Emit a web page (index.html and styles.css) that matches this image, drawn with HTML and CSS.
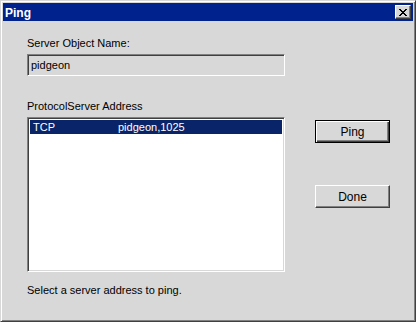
FILE: index.html
```html
<!DOCTYPE html>
<html lang="en">
<head>
    <meta charset="UTF-8">
    <title>Ping</title>
    <link rel="stylesheet" href="styles.css">
</head>
<body>
    <div class="window">
        <div class="titlebar">
            <span class="title">Ping</span>
            <button class="close-btn" aria-label="Close">
                <svg width="8" height="7" viewBox="0 0 8 7">
                    <path d="M0 0h2v1h1v1h2V1h1V0h2v1H7v1H6v1H5v1h1v1h1v1h1v1H6V6H5V5H3v1H2v1H0V6h1V5h1V4h1V3H2V2H1V1H0z" fill="#000"/>
                </svg>
            </button>
        </div>

        <div class="content">
            <div class="left">
                <div class="label first">Server Object Name:</div>
                <div class="textbox">pidgeon</div>

                <div class="label second">ProtocolServer Address</div>
                <div class="listbox">
                    <div class="row selected">
                        <span class="col-proto">TCP</span>
                        <span class="col-addr">pidgeon,1025</span>
                    </div>
                </div>

                <div class="status">Select a server address to ping.</div>
            </div>

            <div class="right">
                <button class="button default">Ping</button>
                <button class="button done">Done</button>
            </div>
        </div>
    </div>
</body>
</html>
```

FILE: styles.css
```css
body {
    margin: 0;
    background-color: #d8d8d8;
    font-family: "Liberation Sans", Arial, sans-serif;
    font-size: 11px;
    color: #000;
}
.window {
    width: 416px;
    height: 322px;
    box-sizing: border-box;
    background-color: #d8d8d8;
    border: 1px solid;
    border-color: #d8d8d8 #404040 #404040 #d8d8d8;
    box-shadow: inset 1px 1px 0 #fff, inset -1px -1px 0 #808080;
    padding: 2px;
}
.titlebar {
    height: 18px;
    background-color: #00228c;
    display: flex;
    align-items: center;
    justify-content: space-between;
    padding: 0 2px 0 2px;
}
.title {
    color: #fff;
    font-weight: bold;
    font-size: 12px;
    padding-top: 1px;
}
.close-btn {
    width: 16px;
    height: 14px;
    padding: 0;
    margin: 0;
    background-color: #d8d8d8;
    border: 1px solid;
    border-color: #fff #404040 #404040 #fff;
    box-shadow: inset -1px -1px 0 #808080;
    display: flex;
    align-items: center;
    justify-content: center;
}
.close-btn svg {
    display: block;
    margin-left: -1px;
}
.content {
    display: flex;
    padding-left: 24px;
}
.left {
    width: 258px;
    display: flex;
    flex-direction: column;
}
.label {
    line-height: 13px;
}
.label.first {
    margin-top: 16px;
}
.label.second {
    margin-top: 24px;
}
.textbox {
    margin-top: 4px;
    height: 22px;
    box-sizing: border-box;
    border: 1px solid;
    border-color: #808080 #fff #fff #808080;
    box-shadow: inset 1px 1px 0 #404040, inset -1px -1px 0 #d8d8d8;
    padding: 3px 0 0 3px;
    line-height: 14px;
}
.listbox {
    margin-top: 4px;
    height: 155px;
    box-sizing: border-box;
    background-color: #fff;
    border: 1px solid;
    border-color: #808080 #fff #fff #808080;
    box-shadow: inset 1px 1px 0 #404040, inset -1px -1px 0 #d8d8d8;
    padding: 2px;
}
.row {
    display: flex;
    height: 14px;
    line-height: 14px;
}
.row.selected {
    background-color: #0a246a;
    color: #fff;
}
.col-proto {
    width: 85px;
    padding-left: 3px;
}
.status {
    margin-top: 12px;
    line-height: 13px;
}
.right {
    display: flex;
    flex-direction: column;
    margin-left: 30px;
    padding-top: 99px;
}
.button {
    width: 75px;
    height: 23px;
    box-sizing: border-box;
    background-color: #d8d8d8;
    font-family: "Liberation Sans", Arial, sans-serif;
    font-size: 12px;
    color: #000;
    padding: 0;
    border: 1px solid;
    border-color: #fff #404040 #404040 #fff;
    box-shadow: inset -1px -1px 0 #808080;
}
.button.default {
    border-color: #000;
    box-shadow: inset 1px 1px 0 #fff, inset -1px -1px 0 #404040, inset -2px -2px 0 #808080;
}
.button.done {
    margin-top: 42px;
}
```
